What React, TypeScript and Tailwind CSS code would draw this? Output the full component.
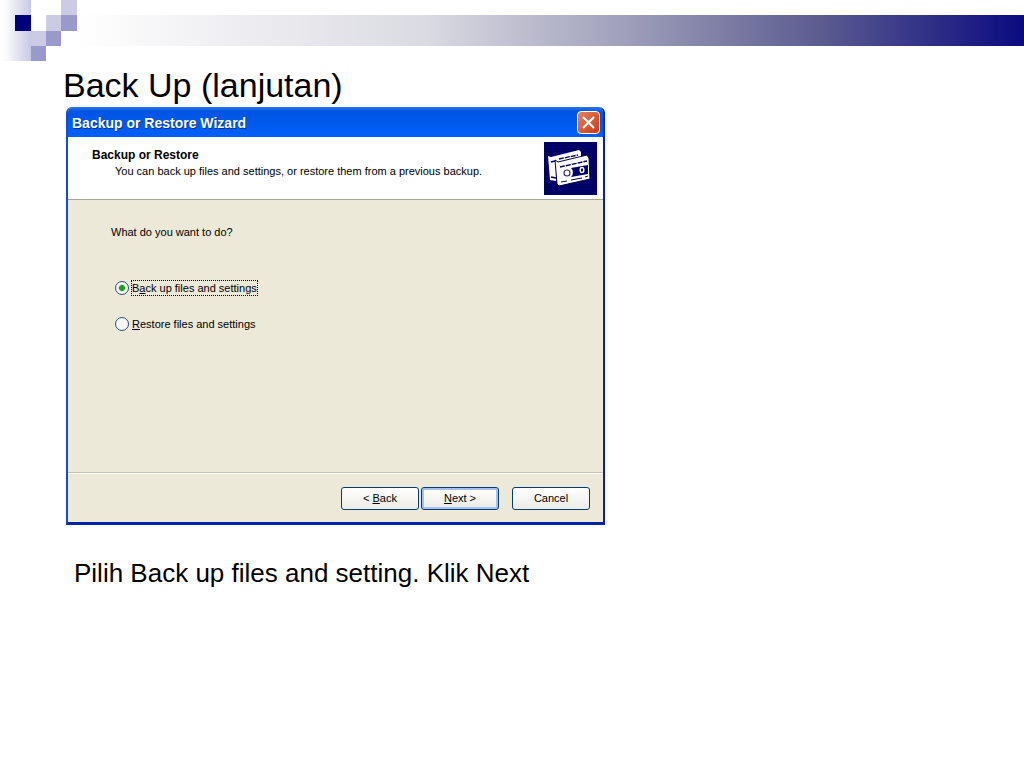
import React from 'react';

const CHOICES = [
  { id: 'backup', before: 'B', key: 'a', after: 'ck up files and settings', focused: true },
  { id: 'restore', before: '', key: 'R', after: 'estore files and settings', focused: false },
];

const CornerSquares: React.FC = () => (
  <svg width="77" height="61" viewBox="0 0 77 61" shapeRendering="crispEdges" aria-hidden="true">
    <defs>
      <linearGradient id="fade">
        <stop offset="0" stopColor="#ffffff" />
        <stop offset="0.2" stopColor="#fafafd" />
        <stop offset="1" stopColor="#c8c8e4" />
      </linearGradient>
    </defs>
    <rect width="31" height="61" fill="url(#fade)" />
    <rect x="15" y="15" width="16" height="16" fill="#00007d" />
    <rect x="61" width="16" height="15" fill="#cbcbe5" />
    <rect x="46" y="15" width="15" height="16" fill="#cbcbe5" />
    <rect x="31" y="31" width="15" height="15" fill="#cbcbe5" />
    <rect x="61" y="15" width="16" height="16" fill="#9999cc" />
    <rect x="46" y="31" width="15" height="15" fill="#9999cc" />
    <rect x="31" y="46" width="15" height="15" fill="#9999cc" />
  </svg>
);

const TapeIcon: React.FC = () => (
  <svg width="53" height="53" viewBox="0 0 53 53" className="shrink-0" aria-hidden="true">
    <defs>
      <pattern id="dots" width="3" height="3" patternUnits="userSpaceOnUse">
        <rect width="3" height="3" fill="#00006c" />
        <rect width="1" height="1" fill="#000040" />
      </pattern>
    </defs>
    <rect width="53" height="53" fill="url(#dots)" />
    {/* back cassette */}
    <path d="M4 14L7 15L35 8L37 10L37 18L12 22L12 39L6 38Z" fill="#fff" />
    <path d="M7 20L11 19M15 17L34 13" stroke="#00004c" strokeWidth="1.3" strokeDasharray="5 1" />
    <path d="M7 35L12 36" stroke="#00004c" strokeWidth="1.3" />
    {/* front cassette */}
    <path d="M11 18L14 20L43 13L45 16L46 37L15 44L13 42Z" fill="#fff" stroke="#00004c" strokeWidth="1" />
    <path d="M16 25L43 19" stroke="#00004c" strokeWidth="1.4" strokeDasharray="5 1" />
    <path d="M27 26L44 23V32L27 35Q31 30 27 26Z" fill="#00006c" />
    <circle cx="23" cy="31" r="3" fill="#fff" stroke="#303070" strokeWidth="1.2" />
    <ellipse cx="38" cy="28" rx="1.8" ry="2.5" fill="#00006c" stroke="#fff" strokeWidth="1.4" />
    <path d="M17 40L23 39M27 38L38 36M41 35L44 34" stroke="#00004c" strokeWidth="1" />
  </svg>
);

const App: React.FC = () => {
  return (
    <div className="min-h-screen bg-white pb-10 font-['Liberation_Sans',Arial,sans-serif] text-black">
      {/* Slide ribbon */}
      <header className="flex items-start">
        <CornerSquares />
        <div className="mt-[15px] h-[31px] flex-1 bg-[linear-gradient(to_right,#ffffff,#dadae2_37%,#9f9fbb_58%,#5a5a8f_79%,#0a0a80)]" />
      </header>

      <main className="px-[63px]">
        <h1 className="pt-1 pb-[2px] text-[34px] leading-10">Back Up (lanjutan)</h1>

        {/* Wizard window */}
        <section className="ml-[3px] max-w-[539px] overflow-hidden rounded-t-md border-x-2 border-b-3 border-l-[#0a50dc] border-r-[#0024a8] border-b-[#0024a8] bg-[#ece9d8] text-[11px]">
          <div className="flex h-[30px] items-center justify-between bg-linear-to-b/srgb from-[#2a78f0] via-[#0054e3] via-15% to-[#0060fa] pr-[3px] pl-1 text-white">
            <h2 className="pt-[2px] text-sm font-bold [text-shadow:1px_1px_#0a2f8c]">Backup or Restore Wizard</h2>
            <button type="button" aria-label="Close" className="flex size-[23px] items-center justify-center rounded-sm border border-white bg-linear-to-br/srgb from-[#e8805f] to-[#c93a14]">
              <svg width="13" height="13" viewBox="0 0 13 13" stroke="#fff" strokeWidth="2.2" aria-hidden="true">
                <path d="M1 1L12 12M12 1L1 12" />
              </svg>
            </button>
          </div>

          <div className="flex h-[63px] items-start justify-between border-b border-[#aca899] bg-white pt-[5px] pr-[6px] pl-6">
            <div className="pt-[5px] leading-4">
              <h3 className="text-xs leading-4 font-bold">Backup or Restore</h3>
              <p className="pl-[23px]">You can back up files and settings, or restore them from a previous backup.</p>
            </div>
            <TapeIcon />
          </div>

          <fieldset className="h-[272px] px-[43px] pt-6">
            <legend className="float-left w-full leading-4">What do you want to do?</legend>
            <div className="clear-both flex flex-col gap-5 pt-10 pl-1">
              {CHOICES.map((c) => (
                <label key={c.id} className="flex h-4 items-center gap-[2px]">
                  <input
                    type="radio"
                    name="task"
                    defaultChecked={c.focused}
                    className="size-[14px] appearance-none rounded-full border border-[#1c5180] bg-[#f6f6f2] checked:bg-radial checked:from-[#21a121] checked:from-30% checked:to-[#f6f6f2] checked:to-45%"
                  />
                  <span className={c.focused ? 'border border-dotted border-black leading-[14px]' : 'border border-transparent leading-[14px]'}>
                    {c.before}<u>{c.key}</u>{c.after}
                  </span>
                </label>
              ))}
            </div>
          </fieldset>

          <div className="flex h-[50px] justify-end border-t border-[#c5c2b2] pt-[14px] pr-[13px] shadow-[inset_0_1px_#fff]">
            <button type="button" className="mr-[2px] h-[23px] w-[78px] rounded-[3px] border border-[#003c74] bg-linear-to-b/srgb from-white to-[#ecebe5]">
              &lt; <u>B</u>ack
            </button>
            <button type="button" className="mr-[13px] h-[23px] w-[78px] rounded-[3px] border border-[#003c74] bg-linear-to-b/srgb from-white to-[#ecebe5] inset-ring-2 inset-ring-[#a3c0ee]">
              <u>N</u>ext &gt;
            </button>
            <button type="button" className="h-[23px] w-[78px] rounded-[3px] border border-[#003c74] bg-linear-to-b/srgb from-white to-[#ecebe5]">
              Cancel
            </button>
          </div>
        </section>

        <p className="pt-8 pl-[11px] text-[26px] leading-8">Pilih Back up files and setting. Klik Next</p>
      </main>
    </div>
  );
};

export default App;
